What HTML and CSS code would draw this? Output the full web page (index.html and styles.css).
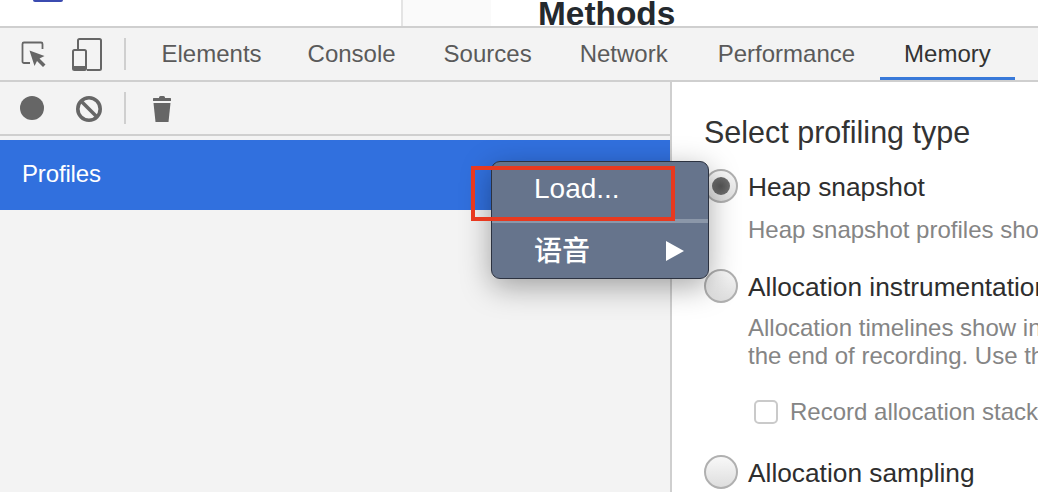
FILE: index.html
```html
<!DOCTYPE html>
<html lang="en">
<head>
    <meta charset="UTF-8">
    <title>Memory - DevTools</title>
    <link rel="stylesheet" href="styles.css">
</head>
<body>
    <div class="page-strip">
        <div class="page-logo"></div>
        <div class="page-side"></div>
        <div class="page-title">Methods</div>
    </div>

    <div class="main-toolbar">
        <div class="tool-icons">
            <svg class="icon" width="32" height="32" viewBox="0 0 32 32">
                <path d="M11 25H5a1.500 1.500 0 0 1-1.500-1.500V6A1.500 1.500 0 0 1 5 4.500h17A1.500 1.500 0 0 1 23.500 6v5" fill="none" stroke="#666" stroke-width="1.800"/>
                <path d="M10.500 12.500l15 5.500-5 2.500 6 6-2.500 2.500-6-6-2.500 5z" fill="#666"/>
            </svg>
            <svg class="icon" width="32" height="34" viewBox="0 0 32 34">
                <path d="M7 12V3.500A1.500 1.500 0 0 1 8.500 2h20A1.500 1.500 0 0 1 30 3.500v28a1.500 1.500 0 0 1-1.500 1.500H16" fill="none" stroke="#666" stroke-width="2"/>
                <rect x="2" y="13" width="13" height="20" rx="1.500" fill="none" stroke="#666" stroke-width="2"/>
                <rect x="2" y="29" width="13" height="4" fill="#666"/>
            </svg>
        </div>
        <div class="divider"></div>
        <nav class="tabs">
            <a class="tab">Elements</a>
            <a class="tab">Console</a>
            <a class="tab">Sources</a>
            <a class="tab">Network</a>
            <a class="tab perf">Performance</a>
            <a class="tab active">Memory</a>
        </nav>
    </div>

    <div class="panels">
        <div class="sidebar">
            <div class="sub-toolbar">
                <svg class="record" width="24" height="24" viewBox="0 0 24 24"><circle cx="12" cy="12" r="12" fill="#666"/></svg>
                <svg class="clear" width="28" height="28" viewBox="0 0 28 28">
                    <circle cx="14" cy="14" r="11.200" fill="none" stroke="#666" stroke-width="3.600"/>
                    <path d="M6 6l16 16" stroke="#666" stroke-width="3.600"/>
                </svg>
                <div class="divider short"></div>
                <svg class="trash" width="20" height="28" viewBox="0 0 20 28">
                    <path d="M7 2.500Q7 1 8.500 1h3Q13 1 13 2.500V3h5.500Q19 3 19 4v2H1V4q0-1 .500-1H7z" fill="#666"/>
                    <path d="M1.500 8h17L16.500 27h-13z" fill="#666"/>
                </svg>
            </div>
            <div class="profiles-row">Profiles</div>
        </div>

        <div class="content">
            <h2>Select profiling type</h2>

            <div class="option first">
                <span class="radio checked"></span>
                <span class="option-label">Heap snapshot</span>
            </div>
            <p class="desc one">Heap snapshot profiles show memory distribution among your page's JavaScript objects</p>

            <div class="option second">
                <span class="radio"></span>
                <span class="option-label">Allocation instrumentation on timeline</span>
            </div>
            <p class="desc">Allocation timelines show instrumented JavaScript memory allocations over time. Once<br>the end of recording. Use this profile type to isolate memory leaks.</p>

            <div class="check-row">
                <span class="checkbox"></span>
                <span class="check-label">Record allocation stacks (extra performance overhead)</span>
            </div>

            <div class="option third">
                <span class="radio"></span>
                <span class="option-label">Allocation sampling</span>
            </div>
        </div>
    </div>

    <div class="context-menu">
        <div class="menu-item load">Load...</div>
        <div class="menu-sep"></div>
        <div class="menu-item lang">语音<span class="arrow"></span></div>
    </div>
    <div class="red-box"></div>
</body>
</html>
```

FILE: styles.css
```css
html, body {
    margin: 0;
    height: 492px;
    overflow: hidden;
}
body {
    font-family: 'Liberation Sans', 'Noto Sans CJK SC', sans-serif;
    background: #f3f3f3;
    position: relative;
}

/* page above the devtools */
.page-strip {
    height: 26px;
    background: white;
    display: flex;
    overflow: hidden;
    position: relative;
}
.page-logo {
    width: 30px;
    height: 2px;
    margin-left: 33px;
    background: #3b4bb0;
    border-radius: 0 0 6px 6px;
}
.page-side {
    width: 88px;
    margin-left: 338px;
    background: #fafafa;
    border-left: 2px solid #e4e4e4;
}
.page-title {
    margin-left: 47px;
    margin-top: -4px;
    font-size: 33.4px;
    line-height: 36px;
    font-weight: bold;
    color: #24292e;
}

.main-toolbar {
    height: 52px;
    border-top: 2px solid #cfcfcf;
    border-bottom: 2px solid #cfcfcf;
    background: #f3f3f3;
    display: flex;
    align-items: center;
}
.tool-icons {
    display: flex;
    align-items: center;
    gap: 20px;
    margin-left: 19px;
}
.divider {
    width: 2px;
    height: 32px;
    background: #cfcfcf;
    margin-left: 21px;
}
.tabs {
    display: flex;
    height: 52px;
    margin-left: 12px;
}
.tab {
    padding: 0 24px;
    font-size: 24px;
    line-height: 52px;
    color: #5a5a5a;
}
.tabs .tab:first-child {
    padding: 0 22px 0 23.500px;
}
.tab.perf {
    margin-left: 2px;
}
.tab.active {
    margin-left: 1px;
    color: #333;
    border-bottom: 3px solid #3879d9;
    height: 49px;
}

.panels {
    display: flex;
    height: 410px;
}
.sidebar {
    width: 670px;
    border-right: 2px solid #cfcfcf;
    background: #f3f3f3;
}
.sub-toolbar {
    height: 52px;
    border-bottom: 2px solid #cfcfcf;
    display: flex;
    align-items: center;
}
.record {
    margin-left: 20px;
}
.clear {
    margin-left: 31px;
    margin-top: 2px;
}
.divider.short {
    margin-left: 21px;
}
.trash {
    margin-left: 26px;
    margin-top: 2px;
}
.profiles-row {
    margin-top: 4px;
    height: 70px;
    padding-left: 22px;
    background: #3170de;
    color: white;
    font-size: 24px;
    line-height: 68px;
    letter-spacing: -0.15px;
}

.content {
    flex: 1;
    min-width: 0;
    background: white;
    padding-left: 32px;
    white-space: nowrap;
    overflow: hidden;
}
h2 {
    margin: 31px 0 0;
    font-size: 30.5px;
    line-height: 38px;
    font-weight: normal;
    color: #333;
}
.option {
    display: flex;
    align-items: center;
    gap: 10px;
}
.option.first {
    margin-top: 19px;
}
.option.second {
    margin-top: 26px;
}
.option.third {
    margin-top: 29px;
}
.radio {
    flex: none;
    width: 30px;
    height: 30px;
    border: 2px solid #b0b0b0;
    border-radius: 50%;
    background: linear-gradient(#f8f8f8, #dedede);
    position: relative;
    margin-top: -3px;
}
.radio.checked::after {
    content: "";
    position: absolute;
    left: 6px;
    top: 6px;
    width: 18px;
    height: 18px;
    border-radius: 50%;
    background: radial-gradient(#555, #777);
}
.option-label {
    font-size: 26.3px;
    line-height: 34px;
    color: #2e2e2e;
}
.desc {
    margin: 10px 0 0 44px;
    font-size: 24px;
    line-height: 28px;
    color: #858585;
}
.desc.one {
    margin-top: 12px;
}
.check-row {
    display: flex;
    align-items: center;
    gap: 12px;
    margin: 27px 0 0 50px;
}
.checkbox {
    flex: none;
    width: 20px;
    height: 20px;
    border: 2px solid #cacaca;
    border-radius: 5px;
    background: white;
}
.check-label {
    font-size: 24px;
    line-height: 30px;
    color: #858585;
}

/* native context menu over the panels */
.context-menu {
    position: absolute;
    left: 491px;
    top: 161px;
    width: 216px;
    height: 116px;
    background: #66748c;
    border: 1px solid #2c3240;
    border-radius: 9px;
    box-shadow: 0 8px 30px rgba(0,0,0,0.34);
    color: white;
    font-size: 28px;
}
.menu-item {
    padding-left: 42px;
    position: relative;
}
.menu-item.load {
    height: 57px;
    line-height: 54px;
}
.menu-sep {
    height: 4px;
    background: #8b97a9;
}
.menu-item.lang {
    height: 55px;
    line-height: 58px;
    font-weight: 500;
}
.arrow {
    position: absolute;
    right: 24px;
    top: 18px;
    width: 0;
    height: 0;
    border-left: 18px solid white;
    border-top: 10px solid transparent;
    border-bottom: 10px solid transparent;
}
.red-box {
    position: absolute;
    left: 471px;
    top: 166px;
    width: 196px;
    height: 47px;
    border: 4px solid #e8391f;
}
```
